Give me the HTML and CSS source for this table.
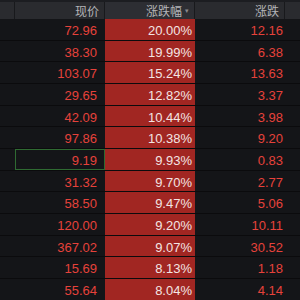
FILE: index.html
```html
<!DOCTYPE html>
<html>
<head>
<meta charset="utf-8">
<link rel="stylesheet" href="styles.css">
</head>
<body>
<div class="screen">
  <div class="topbar"></div>
  <div class="head">
    <div class="hc c0"></div>
    <div class="hc c1">现价</div>
    <div class="hc c2 sorted">涨跌幅<span class="tri">▾</span></div>
    <div class="hc c3">涨跌</div>
    <div class="hc c4"></div>
  </div>
  <div class="rows">
    <div class="row"><div class="c0"></div><div class="c1">72.96</div><div class="c2">20.00%</div><div class="c3">12.16</div><div class="c4"></div></div>
    <div class="row"><div class="c0"></div><div class="c1">38.30</div><div class="c2">19.99%</div><div class="c3">6.38</div><div class="c4"></div></div>
    <div class="row"><div class="c0"></div><div class="c1">103.07</div><div class="c2">15.24%</div><div class="c3">13.63</div><div class="c4"></div></div>
    <div class="row"><div class="c0"></div><div class="c1">29.65</div><div class="c2">12.82%</div><div class="c3">3.37</div><div class="c4"></div></div>
    <div class="row"><div class="c0"></div><div class="c1">42.09</div><div class="c2">10.44%</div><div class="c3">3.98</div><div class="c4"></div></div>
    <div class="row"><div class="c0"></div><div class="c1">97.86</div><div class="c2">10.38%</div><div class="c3">9.20</div><div class="c4"></div></div>
    <div class="row"><div class="c0"></div><div class="c1 selected">9.19</div><div class="c2">9.93%</div><div class="c3">0.83</div><div class="c4"></div></div>
    <div class="row"><div class="c0"></div><div class="c1">31.32</div><div class="c2">9.70%</div><div class="c3">2.77</div><div class="c4"></div></div>
    <div class="row"><div class="c0"></div><div class="c1">58.50</div><div class="c2">9.47%</div><div class="c3">5.06</div><div class="c4"></div></div>
    <div class="row"><div class="c0"></div><div class="c1">120.00</div><div class="c2">9.20%</div><div class="c3">10.11</div><div class="c4"></div></div>
    <div class="row"><div class="c0"></div><div class="c1">367.02</div><div class="c2">9.07%</div><div class="c3">30.52</div><div class="c4"></div></div>
    <div class="row"><div class="c0"></div><div class="c1">15.69</div><div class="c2">8.13%</div><div class="c3">1.18</div><div class="c4"></div></div>
    <div class="row"><div class="c0"></div><div class="c1">55.64</div><div class="c2">8.04%</div><div class="c3">4.14</div><div class="c4"></div></div>
  </div>
  <div class="footer"></div>
</div>
</body>
</html>
```
FILE: styles.css
```css
html, body {
  margin: 0;
  padding: 0;
  background: #141518;
}
.screen {
  width: 300px;
  height: 300px;
  overflow: hidden;
  background: #141518;
  font-family: "Liberation Sans", Arial, "Noto Sans CJK SC", sans-serif;
  display: flex;
  flex-direction: column;
}
.topbar {
  height: 2px;
  background: #1c1d21;
  flex: none;
}
.head {
  height: 17px;
  display: flex;
  background: #2a2b2f;
  flex: none;
}
.hc {
  box-sizing: border-box;
  font-size: 12px;
  line-height: 17px;
  color: #b4b4b8;
  text-align: right;
  border-right: 1px solid #18191c;
  font-family: "Noto Sans CJK SC", "Liberation Sans", sans-serif;
}
.hc.c1 { padding-right: 5px; }
.hc.c2 { padding-right: 5px; background: #2d2e33; }
.hc.c3 { padding-right: 5px; }
.hc.c4 { border-right: none; }
.tri {
  font-size: 7px;
  color: #8a8a8e;
  margin-left: 3px;
  vertical-align: top;
}
.c0 { width: 15px; flex: none; }
.c1 { width: 90px; flex: none; }
.c2 { width: 90px; flex: none; }
.c3 { width: 90px; flex: none; }
.c4 { flex: 1; }
.rows {
  display: flex;
  flex-direction: column;
  flex: none;
}
.row {
  height: 21.67px;
  box-sizing: border-box;
  border-bottom: 1.4px solid #0b0b0d;
  display: flex;
  font-size: 13px;
  line-height: 21px;
  color: #e6423b;
}
.row > div {
  box-sizing: border-box;
  text-align: right;
  padding-top: 1px;
}
.row .c1 { padding-right: 8px; }
.row .c2 {
  background: #a12622;
  color: #f3e4e3;
  padding-right: 3px;
}
.row .c3 { padding-right: 2px; }
.row .selected {
  box-shadow: inset 0 0 0 1px #2f6a32;
}
.footer {
  flex: 1;
  background: #2a2b2f;
}
```
